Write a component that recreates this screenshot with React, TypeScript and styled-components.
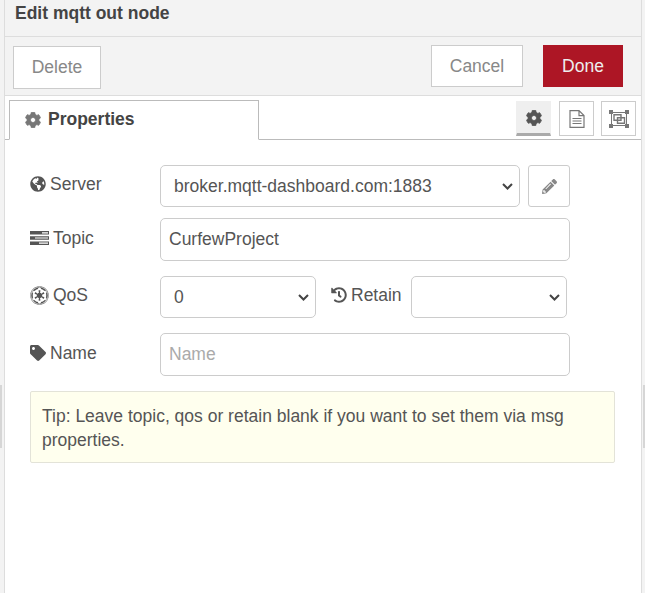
import React from "react";
import styled, { createGlobalStyle } from "styled-components";
import {
  FaCog,
  FaGlobeAmericas,
  FaEmpire,
  FaHistory,
  FaTag,
  FaPencilAlt,
} from "react-icons/fa";

const Global = createGlobalStyle`
  html, body { margin: 0; padding: 0; background: #f3f3f3; }
  body { width: 645px; height: 593px; overflow: hidden; font-family: "Liberation Sans", Arial, sans-serif; color: #555; }
  * { box-sizing: border-box; }
`;

const Shell = styled.div`
  display: flex;
  width: 645px;
  height: 593px;
`;

const Edge = styled.div<{ $side: "left" | "right" }>`
  flex: 0 0 ${(p) => (p.$side === "left" ? "5px" : "4px")};
  display: flex;
  align-items: flex-start;
  justify-content: ${(p) => (p.$side === "left" ? "flex-start" : "flex-end")};
  background: #f3f3f3;
  border-${(p) => (p.$side === "left" ? "right" : "left")}: 1px solid #ddd;
  padding-top: 385px;
`;

const Grip = styled.div`
  width: 2px;
  height: 63px;
  background: #d6d6d6;
`;

const Panel = styled.div`
  flex: 1;
  min-width: 0;
  display: flex;
  flex-direction: column;
  background: #fff;
`;

const Header = styled.div`
  height: 37px;
  padding: 4px 0 0 10px;
  background: #f3f3f3;
  border-bottom: 1px solid #ddd;
  font-size: 17.5px;
  line-height: 18px;
  font-weight: 700;
  color: #444;
`;

const Toolbar = styled.div`
  height: 59px;
  padding: 8px 18px 0 8px;
  display: flex;
  align-items: flex-start;
  background: #f3f3f3;
  border-bottom: 1px solid #ddd;
`;

const Button = styled.button<{ $primary?: boolean; $width: number; $drop?: number; $gap?: number }>`
  width: ${(p) => p.$width}px;
  height: ${(p) => (p.$drop ? 43 : 42)}px;
  margin-top: ${(p) => p.$drop ?? 0}px;
  margin-left: ${(p) => p.$gap ?? 0}px;
  padding: 0;
  border: 1px solid ${(p) => (p.$primary ? "#ad1625" : "#ccc")};
  background: ${(p) => (p.$primary ? "#ad1625" : "#fff")};
  color: ${(p) => (p.$primary ? "#eee" : "#888")};
  font: 17.5px "Liberation Sans", Arial, sans-serif;
`;

const Spacer = styled.div`
  flex: 1;
`;

const TabBar = styled.div`
  height: 44px;
  padding: 4px 5px 0 4px;
  display: flex;
  align-items: flex-start;
  border-bottom: 1px solid #bbb;
`;

const Tab = styled.div`
  width: 250px;
  height: 40px;
  padding: 0 0 1px 15px;
  display: flex;
  align-items: center;
  gap: 7px;
  background: #fff;
  border: 1px solid #bbb;
  border-bottom: 1px solid #fff;
  font-size: 17.5px;
  font-weight: 700;
  color: #444;
`;

const Cog = styled(FaCog)`
  font-size: 16px;
  stroke: currentColor;
  stroke-width: 24px;
`;

const TabCog = styled(Cog)`
  color: #777;
`;

const ToolIcons = styled.div`
  margin-left: auto;
  margin-top: 1px;
  display: flex;
  gap: 7px;
`;

const ToolIcon = styled.div<{ $active?: boolean }>`
  width: 35px;
  height: 35px;
  margin-right: ${(p) => (p.$active ? 1 : 0)}px;
  display: flex;
  align-items: center;
  justify-content: center;
  background: ${(p) => (p.$active ? "#efefef" : "#fff")};
  border: 1px solid #ccc;
  border-bottom: ${(p) => (p.$active ? "3px solid #aaa" : "1px solid #ccc")};
  border-color: ${(p) => (p.$active ? "#efefef #efefef #aaa" : "#ccc")};
  color: ${(p) => (p.$active ? "#555" : "#777")};
  font-size: 17px;
`;

const Form = styled.div`
  padding: 25px 0 0 25px;
  display: flex;
  flex-direction: column;
`;

const Row = styled.div<{ $mt: number }>`
  display: flex;
  align-items: flex-start;
  margin-top: ${(p) => p.$mt}px;
`;

const Label = styled.label<{ $nudge: number; $width?: number }>`
  flex: 0 0 ${(p) => p.$width ?? 130}px;
  display: flex;
  align-items: center;
  gap: 4px;
  padding-top: ${(p) => p.$nudge}px;
  font-size: 17.5px;
  line-height: 20px;
  color: #555;
  white-space: nowrap;
  svg { flex: none; color: #555; font-size: 16px; }
`;

const chevron =
  "data:image/svg+xml,%3Csvg xmlns='http://www.w3.org/2000/svg' width='11' height='7' viewBox='0 0 11 7'%3E%3Cpath d='M1 1l4.500 4.500L10 1' fill='none' stroke='%23444' stroke-width='2'/%3E%3C/svg%3E";

const Select = styled.select<{ $width: number }>`
  appearance: none;
  width: ${(p) => p.$width}px;
  height: 42px;
  padding: 0 0 0 13px;
  background: #fff url("${chevron}") no-repeat right 6px center;
  border: 1px solid #ccc;
  border-radius: 5px;
  color: #555;
  font: 17.5px "Liberation Sans", Arial, sans-serif;
`;

const Input = styled.input`
  width: 410px;
  height: 43px;
  padding: 0 8px;
  background: #fff;
  border: 1px solid #ccc;
  border-radius: 5px;
  color: #555;
  font: 17.5px "Liberation Sans", Arial, sans-serif;
  &::placeholder { color: #aaa; opacity: 1; }
`;

const EditButton = styled.button`
  width: 42px;
  height: 42px;
  margin-left: 8px;
  padding: 0;
  display: flex;
  align-items: center;
  justify-content: center;
  background: #fff;
  border: 1px solid #ccc;
  border-radius: 3px;
  color: #888;
  font-size: 15px;
`;

const RetainLabel = styled(Label)`
  flex: 0 0 95px;
  padding-left: 15px;
`;

const QosIcon = styled(FaEmpire)`
  && { font-size: 19px; }
`;

const Tip = styled.div`
  width: 585px;
  height: 72px;
  margin-top: 15px;
  padding: 12px 11px 0;
  background: #ffe;
  border: 1px solid #e3e3d8;
  border-radius: 2px;
  font-size: 17.5px;
  line-height: 24px;
  color: #555;
`;

const TasksIcon = () => (
  <svg width="19" height="14" viewBox="0 0 19 14" aria-hidden="true">
    <path fill="currentColor" d="M0 0h19v3.600H0zM0 5.200h19v3.600H0zM0 10.400h19V14H0z" />
    <path fill="#fff" d="M12 1.200h6v1.200h-6zM5 6.400h13v1.200H5zM9 11.600h9v1.200H9z" />
  </svg>
);

const FileIcon = () => (
  <svg width="16" height="18" viewBox="0 0 16 18" aria-hidden="true">
    <path fill="none" stroke="#777" strokeWidth="1.200" d="M1 .6h9L15 5.600v11.800H1zM10 .6v5h5" />
    <path fill="none" stroke="#777" strokeWidth="1.200" d="M3.500 8.500h9M3.500 11h9M3.500 13.500h9" />
  </svg>
);

const GroupIcon = () => (
  <svg width="20" height="18" viewBox="0 0 20 18" aria-hidden="true">
    <path fill="none" stroke="#777" strokeWidth="1" d="M2.500 2.500h15v13h-15z" />
    <path fill="none" stroke="#777" strokeWidth="1.400" d="M5 4.700h7v5.600H5zM8.500 7.700h7v5.600h-7z" />
    <path fill="#777" d="M0 0h4v4H0zM16 0h4v4h-4zM0 14h4v4H0zM16 14h4v4h-4z" />
  </svg>
);

export default function App() {
  return (
    <Shell>
      <Global />
      <Edge $side="left">
        <Grip />
      </Edge>
      <Panel>
        <Header>Edit mqtt out node</Header>
        <Toolbar>
          <Button $width={88} $drop={1}>Delete</Button>
          <Spacer />
          <Button $width={92}>Cancel</Button>
          <Button $primary $width={80} $gap={20}>Done</Button>
        </Toolbar>
        <TabBar>
          <Tab>
            <TabCog />
            Properties
          </Tab>
          <ToolIcons>
            <ToolIcon $active><Cog /></ToolIcon>
            <ToolIcon><FileIcon /></ToolIcon>
            <ToolIcon><GroupIcon /></ToolIcon>
          </ToolIcons>
        </TabBar>
        <Form>
          <Row $mt={0}>
            <Label $nudge={9} htmlFor="server"><FaGlobeAmericas />Server</Label>
            <Select id="server" $width={360} defaultValue="b">
              <option value="b">broker.mqtt-dashboard.com:1883</option>
            </Select>
            <EditButton aria-label="Edit"><FaPencilAlt /></EditButton>
          </Row>
          <Row $mt={11}>
            <Label $nudge={10} htmlFor="topic"><TasksIcon />Topic</Label>
            <Input id="topic" defaultValue="CurfewProject" />
          </Row>
          <Row $mt={15}>
            <Label $nudge={9} htmlFor="qos"><QosIcon />QoS</Label>
            <Select id="qos" $width={156} defaultValue="0">
              <option value="0">0</option>
            </Select>
            <RetainLabel $nudge={9} htmlFor="retain"><FaHistory />Retain</RetainLabel>
            <Select id="retain" $width={156} defaultValue="">
              <option value=""></option>
            </Select>
          </Row>
          <Row $mt={15}>
            <Label $nudge={10} htmlFor="name"><FaTag />Name</Label>
            <Input id="name" placeholder="Name" />
          </Row>
          <Tip>Tip: Leave topic, qos or retain blank if you want to set them via msg properties.</Tip>
        </Form>
      </Panel>
      <Edge $side="right">
        <Grip />
      </Edge>
    </Shell>
  );
}
